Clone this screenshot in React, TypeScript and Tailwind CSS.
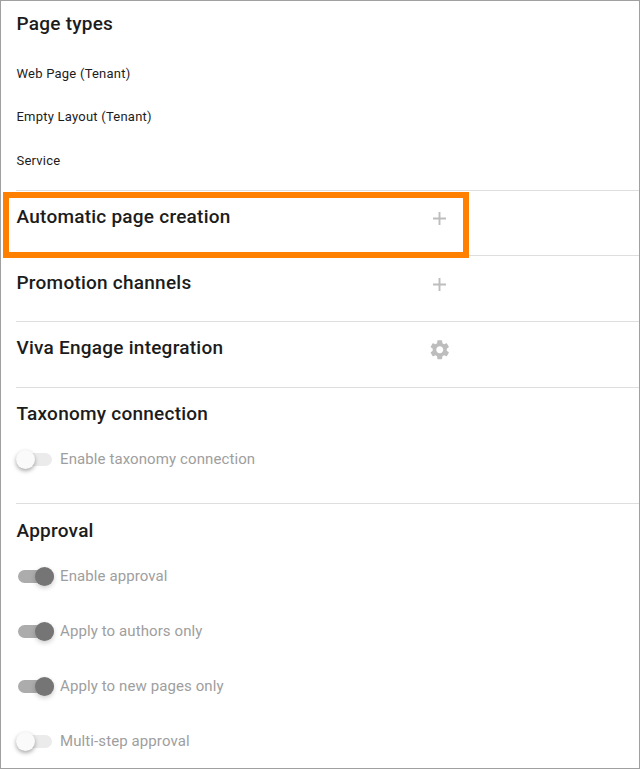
import React from "react";
import { MdSettings } from "react-icons/md";

function Title({ children }: { children: React.ReactNode }) {
  return <h2 className="pl-[0.5px] text-[19px] leading-6 font-medium tracking-[0.24px] text-[#1c1c1c]">{children}</h2>;
}

function Plus() {
  return (
    <svg className="mt-[1px] mr-[-1px] h-[25px] w-[25px] shrink-0" viewBox="0 0 25 25" fill="none" stroke="#bdbdbd">
      <path d="M6 12.5h13M12.5 6v13" strokeWidth="1.9" />
    </svg>
  );
}

function Toggle({ label, on = false }: { label: string; on?: boolean }) {
  return (
    <div className="flex h-[55px] items-center">
      <span className={`mt-[2px] flex h-[13px] w-9 shrink-0 items-center rounded-full ${on ? "ml-[2px] justify-end bg-[#acacac]" : "ml-0 justify-start bg-[#ebebeb]"}`}>
        <span className={`size-[19px] shrink-0 rounded-full ${on ? "bg-[#757575] shadow-[0_2px_5px_rgba(0,0,0,0.2)]" : "bg-[#fafafa] shadow-[0_2px_4px_rgba(0,0,0,0.35)]"}`} />
      </span>
      <span className={`text-[15px] leading-5 tracking-[0.1px] text-[#9e9e9e] ${on ? "ml-[6px]" : "ml-2"}`}>{label}</span>
    </div>
  );
}

export default function App() {
  return (
    <main className="h-[769px] w-[640px] overflow-hidden border border-[#a0a0a0] bg-white pl-[15px] font-[Roboto,sans-serif]">
      <section className="h-[190px] border-b border-[#dedede] pt-[11px]">
        <Title>Page types</Title>
        <ul className="mt-[16px] pl-[0.5px] text-[13px] leading-5 tracking-[0.23px] text-[#1c1c1c]">
          <li className="flex h-[43px] items-center">Web Page (Tenant)</li>
          <li className="flex h-[43px] items-center">Empty Layout (Tenant)</li>
          <li className="flex h-[45px] items-center">Service</li>
        </ul>
      </section>
      <section className="relative flex h-[65px] justify-between border-b border-[#dedede] pt-[14px] pr-[188px]">
        <div className="pointer-events-none absolute top-[1px] -left-[13px] h-[66px] w-[466px] border-[6px] border-[#ff8000]" />
        <Title>Automatic page creation</Title>
        <Plus />
      </section>
      <section className="flex h-[66px] justify-between border-b border-[#dedede] pt-[15px] pr-[188px]">
        <Title>Promotion channels</Title>
        <Plus />
      </section>
      <section className="flex h-[66px] justify-between border-b border-[#dedede] pt-[14px] pr-[188px]">
        <Title>Viva Engage integration</Title>
        <MdSettings className="mt-[2px] mr-[-0.5px] size-[23.5px] text-[#bdbdbd]" />
      </section>
      <section className="h-[116px] border-b border-[#dedede] pt-[14px]">
        <Title>Taxonomy connection</Title>
        <div className="mt-[5px]"><Toggle label="Enable taxonomy connection" /></div>
      </section>
      <section className="pt-[15px]">
        <Title>Approval</Title>
        <div className="mt-[5px]">
          <Toggle label="Enable approval" on />
          <Toggle label="Apply to authors only" on />
          <Toggle label="Apply to new pages only" on />
          <Toggle label="Multi-step approval" />
        </div>
      </section>
    </main>
  );
}
